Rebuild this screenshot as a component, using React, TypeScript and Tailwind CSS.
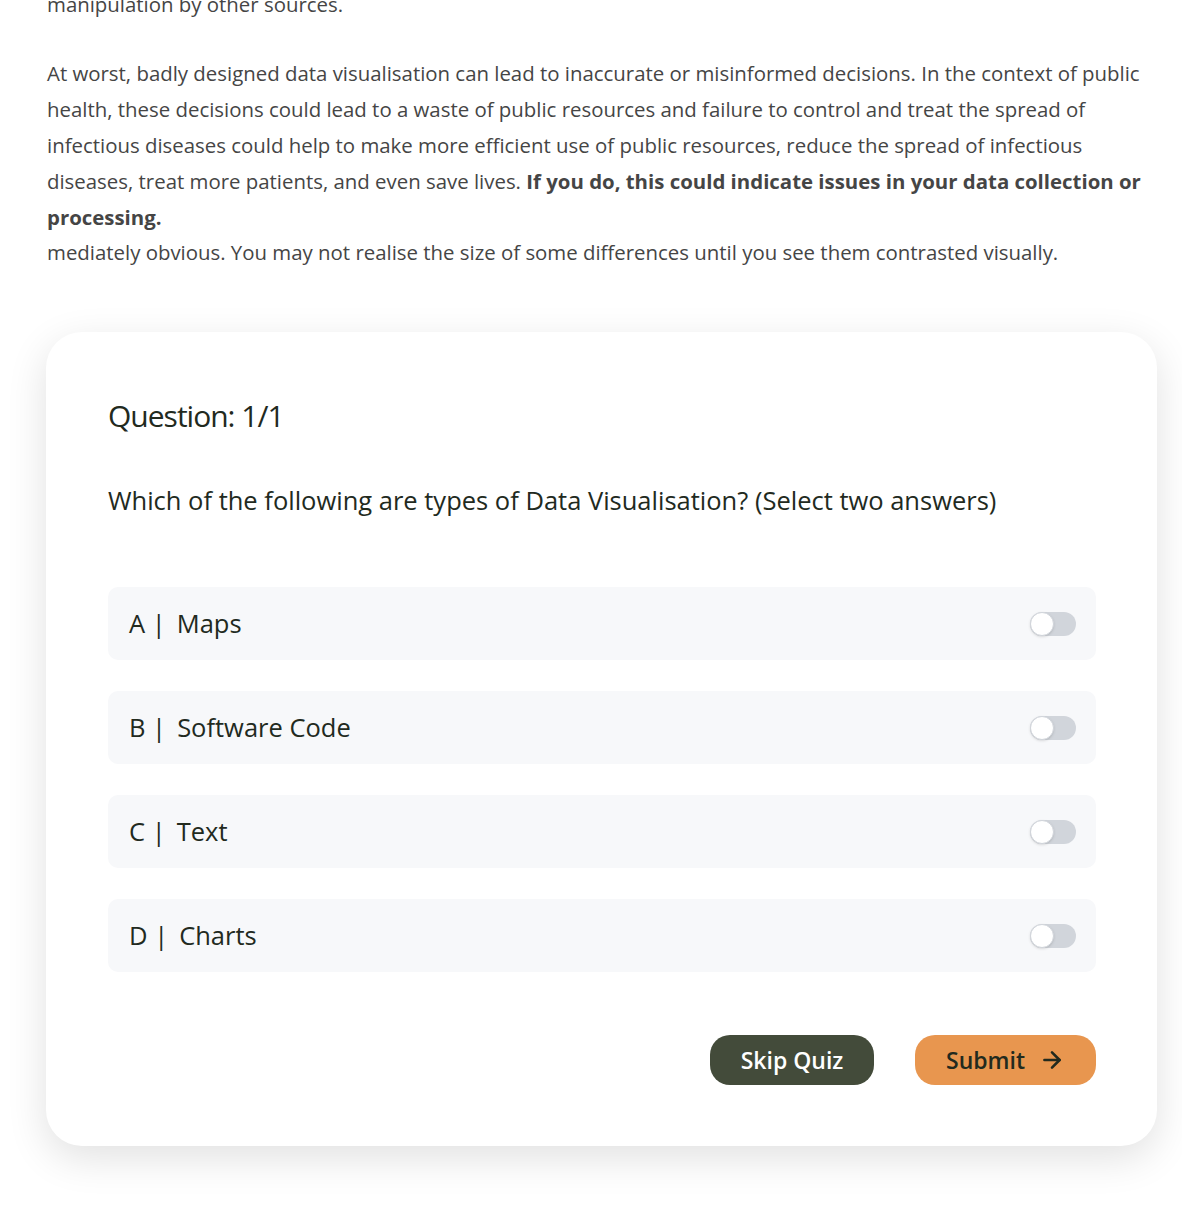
import { useState } from "react";
import { ArrowRight } from "lucide-react";

const OPTIONS = [
  { id: "A", label: "Maps" },
  { id: "B", label: "Software Code" },
  { id: "C", label: "Text" },
  { id: "D", label: "Charts" },
];

function Toggle({ on, onChange }: { on: boolean; onChange: () => void }) {
  return (
    <button
      type="button"
      onClick={onChange}
      className={`relative h-6 w-[46px] shrink-0 rounded-full transition-colors ${
        on ? "bg-[#e8964f]" : "bg-[#d1d5db]"
      }`}
    >
      <span
        className={`absolute top-0 h-6 w-6 rounded-full border border-[#d1d5db] bg-white shadow-sm transition-all ${
          on ? "left-[22px]" : "left-0"
        }`}
      />
    </button>
  );
}

export default function App() {
  const [picked, setPicked] = useState<Record<string, boolean>>({});

  return (
    <div className="min-h-screen bg-white font-['Open_Sans',sans-serif] overflow-hidden">
      <div className="ml-[47px] -mt-[14px] w-[1100px] text-[20.4px] leading-[36px] text-[#454545]">
        <p>manipulation by other sources.</p>
        <p className="mt-[33px]">
          At worst, badly designed data visualisation can lead to inaccurate or misinformed decisions. In the context of
          public health, these decisions could lead to a waste of public resources and failure to control and treat the
          spread of infectious diseases could help to make more efficient use of public resources, reduce the spread of
          infectious diseases, treat more patients, and even save lives.{" "}
          <strong className="font-bold">If you do, this could indicate issues in your data collection or processing.</strong>
        </p>
        <p className="-mt-[1px]">
          mediately obvious. You may not realise the size of some differences until you see them contrasted visually.
        </p>
      </div>

      <div className="mx-[46px] mt-[62px] mb-[64px] w-[1111px] rounded-[36px] bg-white pl-[62px] pr-[61px] pt-[64px] pb-[61px] shadow-[0_12px_40px_rgba(0,0,0,0.12)]">
        <h2 className="text-[30px] leading-[40px] tracking-[-1px] text-[#222a1e]">Question: 1/1</h2>
        <p className="mt-[47px] text-[25.5px] leading-[34px] text-[#222a1e]">
          Which of the following are types of Data Visualisation? (Select two answers)
        </p>

        <div className="mt-[70px] flex flex-col gap-[31px]">
          {OPTIONS.map((o) => (
            <div
              key={o.id}
              className="flex h-[73px] items-center justify-between rounded-[10px] bg-[#f7f8fa] pl-[21px] pr-[20px]"
            >
              <span className="text-[25.5px] text-[#222a1e]">
                {o.id} |<span className="ml-[11px]">{o.label}</span>
              </span>
              <Toggle
                on={!!picked[o.id]}
                onChange={() => setPicked((p) => ({ ...p, [o.id]: !p[o.id] }))}
              />
            </div>
          ))}
        </div>

        <div className="mt-[63px] flex justify-end gap-[41px]">
          <button
            type="button"
            className="h-[50px] w-[164px] rounded-[20px] bg-[#434b3a] text-[23px] font-semibold text-white"
          >
            Skip Quiz
          </button>
          <button
            type="button"
            className="flex h-[50px] w-[181px] items-center justify-center gap-[14px] rounded-[20px] bg-[#e8964f] text-[23px] font-semibold text-[#222a1e]"
          >
            Submit <ArrowRight size={26} strokeWidth={2.4} />
          </button>
        </div>
      </div>
    </div>
  );
}
